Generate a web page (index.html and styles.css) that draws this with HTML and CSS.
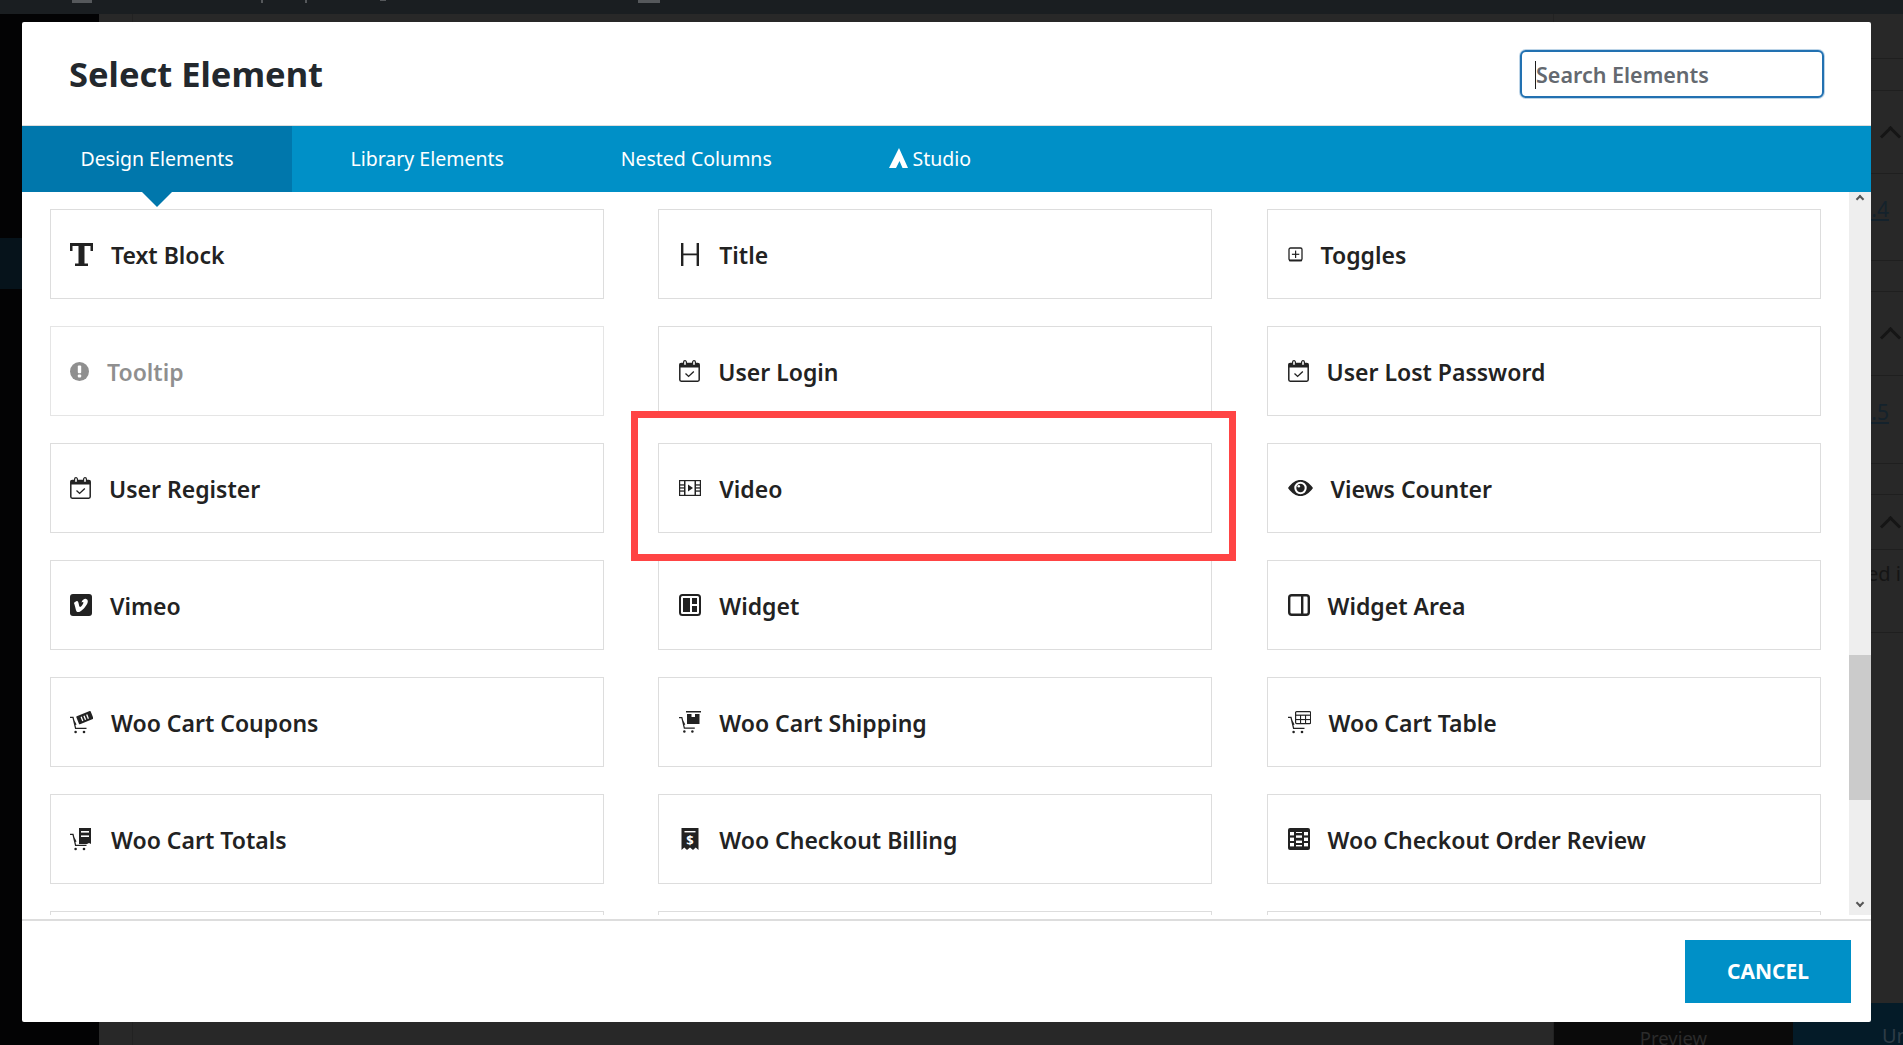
FILE: index.html
```html
<!DOCTYPE html>
<html lang="en">
<head>
<meta charset="utf-8">
<title>Select Element</title>
<link rel="stylesheet" href="styles.css">
</head>
<body>
<div class="backdrop">
  <div class="topbar"><i class="tick t1"></i><i class="tick t2"></i><i class="tick t3"></i><i class="tick t4"></i><i class="tick t5"></i></div>
  <aside class="sidebar"><div class="side-active"></div></aside>
  <main class="main">
    <div class="main-column"></div>
    <section class="panel">
      <div class="panel-rows">
        <div class="prow h45"></div>
        <div class="prow h32"></div>
        <div class="prow h83"><span class="chev"></span></div>
        <div class="prow h87"><a class="plink">Version 1.4</a></div>
        <div class="prow h31"></div>
        <div class="prow h84"><span class="chev"></span></div>
        <div class="prow h88"><a class="plink">Version 1.5</a></div>
        <div class="prow h31"></div>
        <div class="prow h55"><span class="chev"></span></div>
        <div class="prow h83 top"><span class="ptext">Required i</span></div>
      </div>
      <div class="pfoot"><span class="preview">Preview</span><span class="update">Unpublish</span></div>
    </section>
  </main>
</div>

<div class="modal" role="dialog">
  <header class="mhead">
    <h2 class="mtitle">Select Element</h2>
    <div class="search"><input class="search-input" type="text" placeholder="Search Elements"><i class="caret"></i></div>
  </header>
  <nav class="tabs">
    <a class="tab active">Design Elements</a>
    <a class="tab">Library Elements</a>
    <a class="tab">Nested Columns</a>
    <a class="tab studio"><svg class="studio-ico" viewBox="0 0 19 20"><path d="M10 0 L19 20 L13.5 20 L10.5 13 L7 20 L0 20 Z" fill="#fff"/></svg>Studio</a>
  </nav>
  <div class="mbody">
    <div class="grid">
      <div class="card"><svg class="ico w23" viewBox="0 0 23 23"><rect x="0" y="0" width="23" height="3"/><rect x="0" y="0" width="2.5" height="8"/><rect x="20.5" y="0" width="2.5" height="8"/><rect x="8.5" y="0" width="6" height="23"/><rect x="5" y="20.5" width="13" height="2.5"/></svg><span>Text Block</span></div>
      <div class="card"><svg class="ico w22t" viewBox="0 0 22 23"><rect x="2" y="0" width="2.4" height="23"/><rect x="17.6" y="0" width="2.4" height="23"/><rect x="2" y="10.5" width="18" height="1.8"/></svg><span>Title</span></div>
      <div class="card"><svg class="ico w15" viewBox="0 0 15 15"><rect x="1" y="1" width="13" height="12.5" rx="1.5" fill="none" stroke="currentColor" stroke-width="1.3"/><rect x="1" y="12.6" width="13" height="1.7"/><rect x="7" y="3.6" width="1.2" height="7.4"/><rect x="3.9" y="6.7" width="7.4" height="1.2"/></svg><span>Toggles</span></div>

      <div class="card off"><svg class="ico w19" viewBox="0 0 19 19"><circle cx="9.5" cy="9.5" r="9.5"/><rect x="7.8" y="3.6" width="3.4" height="7.6" rx="1" fill="#fff"/><rect x="7.8" y="12.4" width="3.4" height="3.2" rx="1" fill="#fff"/></svg><span>Tooltip</span></div>
      <div class="card"><svg class="ico w21" viewBox="0 0 21 22"><use href="#cal"/></svg><span>User Login</span></div>
      <div class="card"><svg class="ico w21" viewBox="0 0 21 22"><use href="#cal"/></svg><span>User Lost Password</span></div>

      <div class="card"><svg class="ico w21" viewBox="0 0 21 22"><use href="#cal"/></svg><span>User Register</span></div>
      <div class="card"><svg class="ico w22 h16" viewBox="0 0 22 16"><rect x=".6" y=".6" width="20.8" height="14.8" fill="none" stroke="currentColor" stroke-width="1.2"/><rect x="5" y="0" width="1.5" height="16"/><rect x="15.5" y="0" width="1.5" height="16"/><rect x="0" y="4.3" width="6" height="1.3"/><rect x="0" y="7.3" width="6" height="1.3"/><rect x="0" y="10.4" width="6" height="1.3"/><rect x="16" y="4.3" width="6" height="1.3"/><rect x="16" y="7.3" width="6" height="1.3"/><rect x="16" y="10.4" width="6" height="1.3"/><path d="M9 4.5 L14 8 L9 11.5 Z"/></svg><span>Video</span></div>
      <div class="card"><svg class="ico w25 h16" viewBox="0 0 25 16"><path fill-rule="evenodd" d="M0 8 C4 2.5 8 0 12.5 0 C17 0 21 2.5 25 8 C21 13.5 17 16 12.5 16 C8 16 4 13.5 0 8 Z M12.5 1.8 A6.2 6.2 0 1 0 12.5 14.2 A6.2 6.2 0 1 0 12.5 1.8 Z"/><circle cx="12.5" cy="8" r="4.2"/><circle cx="10.8" cy="6.2" r="1.3" fill="#fff"/></svg><span>Views Counter</span></div>

      <div class="card"><svg class="ico w22" viewBox="0 0 22 22"><rect width="22" height="22" rx="3"/><path d="M6.4 17.2 C4.8 12 4.6 10 3.9 9 C5 8 6.1 6.9 7 7 C9.2 7.3 8.6 12.5 10 13 C11.4 13.2 14.5 8.3 13 8.1 C12.5 8 12 8.3 11.5 8.6 C12.3 5.6 14.4 4.6 16 4.9 C18 5.3 18.3 7.4 17.3 9.6 C15.8 12.8 11.8 17.3 9.2 18 C8 18.3 7 18 6.4 17.2 Z" fill="#fff"/></svg><span>Vimeo</span></div>
      <div class="card"><svg class="ico w22" viewBox="0 0 22 22"><rect x="1" y="1" width="20" height="20" rx="2.5" fill="none" stroke="currentColor" stroke-width="2"/><rect x="4" y="4" width="7" height="14"/><rect x="13" y="4" width="5" height="6"/><rect x="13" y="12" width="5" height="6"/></svg><span>Widget</span></div>
      <div class="card"><svg class="ico w22" viewBox="0 0 22 22"><rect x="1.2" y="1.2" width="19.6" height="19.6" rx="2.5" fill="none" stroke="currentColor" stroke-width="2.4"/><rect x="13" y="1" width="2.4" height="20"/></svg><span>Widget Area</span></div>

      <div class="card"><svg class="ico w23" viewBox="0 0 23 23"><use href="#cart"/><g transform="rotate(-22 14.5 6.5)"><rect x="7" y="2.5" width="15.5" height="8.5" rx=".8"/><rect x="11" y="4.6" width="1.3" height="4.4" fill="#fff"/><rect x="14" y="4.6" width="1.3" height="4.4" fill="#fff"/><rect x="17" y="4.6" width="1.3" height="4.4" fill="#fff"/></g></svg><span>Woo Cart Coupons</span></div>
      <div class="card"><svg class="ico w22t" viewBox="0 0 22 23"><use href="#cart"/><rect x="7" y="0" width="15" height="1.5"/><path d="M8 3 H12.5 V6 H16 V3 H20.5 V13 H8 Z"/></svg><span>Woo Cart Shipping</span></div>
      <div class="card"><svg class="ico w23" viewBox="0 0 23 23"><use href="#cart"/><rect x="7.6" y=".6" width="15" height="12" rx="1" fill="none" stroke="currentColor" stroke-width="1.2"/><rect x="7.6" y="3.6" width="15" height="1.2"/><rect x="12" y="4" width="1.1" height="8.5"/><rect x="17" y="4" width="1.1" height="8.5"/><rect x="7.6" y="8" width="15" height="1.1"/></svg><span>Woo Cart Table</span></div>

      <div class="card"><svg class="ico w23 i1" viewBox="0 0 23 23"><use href="#cart"/><path d="M9 0 H21 V16 L19 15 L17 16 H9 Z"/><rect x="11" y="3" width="8" height="1.6" fill="#fff"/><rect x="11" y="7.4" width="8" height="1.6" fill="#fff"/></svg><span>Woo Cart Totals</span></div>
      <div class="card"><svg class="ico w22" viewBox="0 0 22 22"><path d="M2.5 0 H19.5 V22 L16.7 19.5 L14 22 L11 19.5 L8 22 L5.3 19.5 L2.5 22 Z"/><rect x="5.5" y="3" width="11" height="1.4" fill="#fff"/><text class="dollar" x="11" y="17" text-anchor="middle">$</text></svg><span>Woo Checkout Billing</span></div>
      <div class="card"><svg class="ico w22" viewBox="0 0 22 22"><rect width="22" height="22" rx="2"/><g fill="#fff"><rect x="2" y="4" width="4" height="3.4"/><rect x="8" y="4" width="6" height="1"/><rect x="16" y="4" width="4" height="3.4"/><rect x="2" y="9.6" width="4" height="3.4"/><rect x="8" y="7.4" width="6" height="2.4"/><rect x="16" y="9.6" width="4" height="3.4"/><rect x="2" y="15" width="4" height="3.4"/><rect x="8" y="12.6" width="6" height="2.4"/><rect x="8" y="17" width="6" height="1.4"/><rect x="16" y="15" width="4" height="3.4"/></g></svg><span>Woo Checkout Order Review</span></div>

      <div class="card"></div>
      <div class="card"></div>
      <div class="card"></div>
    </div>
    <div class="sbar">
      <span class="sb-up"></span>
      <span class="sb-thumb"></span>
      <span class="sb-down"></span>
    </div>
  </div>
  <footer class="mfoot"><button class="cancel" type="button">CANCEL</button></footer>
</div>

<div class="callout"></div>

<svg class="defs" width="0" height="0" aria-hidden="true">
  <symbol id="cal" viewBox="0 0 21 22">
    <rect x=".8" y="3.4" width="19.4" height="17.8" rx="1.4" fill="none" stroke="currentColor" stroke-width="1.5"/>
    <rect x=".8" y="3.4" width="19.4" height="4.1" fill="currentColor"/>
    <rect x="4.6" y=".7" width="2.8" height="5" rx="1.4" fill="#fff" stroke="currentColor" stroke-width="1.2"/>
    <rect x="13.6" y=".7" width="2.8" height="5" rx="1.4" fill="#fff" stroke="currentColor" stroke-width="1.2"/>
    <path d="M6.5 13.6 L9.6 16.4 L14.8 11.6" fill="none" stroke="currentColor" stroke-width="1.4"/>
  </symbol>
  <symbol id="cart" viewBox="0 0 23 23">
    <path d="M0 6.4 H3 L5.6 17.4 H16.5 M4 10 L6 13.8" fill="none" stroke="currentColor" stroke-width="1.3"/>
    <circle cx="5.6" cy="21" r="1.3" fill="currentColor"/>
    <circle cx="14" cy="21" r="1.3" fill="currentColor"/>
  </symbol>
</svg>
</body>
</html>
```

FILE: styles.css
```css
* { box-sizing: border-box; }
html, body { margin: 0; height: 100%; overflow: hidden; background: #282828; }
body { font-family: "Noto Sans", sans-serif; color: #222; }

/* dimmed page behind the dialog */
.backdrop { display: grid; grid-template-columns: 99px 1fr; grid-template-rows: 14px 1fr; height: 1045px; }
.topbar { grid-column: 1 / 3; background: #1a1e21; display: flex; align-items: flex-start; }
.tick { display: block; background: #55585b; height: 3px; }
.t1 { width: 20px; margin-left: 72px; }
.t2 { width: 2px; margin-left: 169px; }
.t3 { width: 2px; margin-left: 42px; }
.t4 { width: 6px; margin-left: 73px; height: 1px; }
.t5 { width: 22px; margin-left: 252px; }
.sidebar { background: #030304; padding-top: 224px; }
.side-active { height: 51px; background: #06131b; }
.main { display: flex; justify-content: space-between; min-width: 0; }
.main-column { width: 34px; border-right: 1px solid #222; }
.panel { width: 350px; display: flex; flex-direction: column; border-left: 1px solid #222; overflow: hidden; }
.panel-rows { flex: 1; }
.prow { display: flex; align-items: center; justify-content: flex-end; border-bottom: 1px solid #1f1f1f; padding-right: 5px; white-space: nowrap; }
.h45 { height: 45px; } .h32 { height: 32px; } .h83 { height: 83px; } .h87 { height: 87px; }
.h31 { height: 31px; } .h84 { height: 84px; } .h88 { height: 88px; } .h55 { height: 55px; }
.prow.top { align-items: flex-start; padding-top: 10px; padding-right: 0; }
.chev { width: 15px; height: 15px; border-left: 3px solid #151515; border-top: 3px solid #151515; transform: rotate(45deg); margin-top: 8px; }
.plink { color: #14222c; font-size: 21px; text-decoration: underline; margin: 0 9px 16px 0; }
.ptext { color: #151515; font-size: 20px; margin-right: 2px; }
.pfoot { height: 42px; display: flex; font-size: 18.5px; overflow: hidden; }
.preview { width: 240px; background: #0a0a0a; color: #2b2b2b; text-align: center; padding-top: 22px; }
.update { width: 110px; background: #041b28; color: #2d3c46; padding: 19px 0 0 89px; font-size: 20px; white-space: nowrap; }

/* dialog */
.modal { position: absolute; left: 22px; top: 22px; width: 1849px; height: 1000px; background: #fff; border-radius: 2px; display: flex; flex-direction: column; overflow: hidden; }
.mhead { height: 104px; flex: none; border-bottom: 1px solid #ddd; display: flex; align-items: center; justify-content: space-between; padding: 0 47px; }
.mtitle { margin: 2px 0 0; font-size: 34.5px; font-weight: 700; color: #23282d; line-height: 1; }
.search { position: relative; width: 304px; height: 48px; }
.search-input { width: 100%; height: 100%; border: 2px solid #2271b1; border-radius: 6px; padding: 2px 14px 0; font: 600 21.5px "Noto Sans", sans-serif; outline: none; background: #fff; box-shadow: 0 0 0 1px rgba(34, 113, 177, .3); }
.search-input::placeholder { color: #646970; opacity: 1; }
.caret { position: absolute; left: 15px; top: 11px; width: 1px; height: 28px; background: #1e1e1e; }
.tabs { height: 66px; flex: none; background: #0090c7; display: flex; }
.tab { padding: 0 58.4px 2px; color: #fff; font-size: 19.5px; display: flex; align-items: center; position: relative; white-space: nowrap; }
.tab.active { background: #0077ac; }
.tab.active::after { content: ""; position: absolute; left: 120px; bottom: -15px; border-left: 15px solid transparent; border-right: 15px solid transparent; border-top: 15px solid #0077ac; }
.studio-ico { width: 19px; height: 20px; margin-right: 5px; }

.mbody { height: 723px; flex: none; display: flex; }
.grid { flex: 1; min-width: 0; display: grid; grid-template-columns: 553.5px 554px 554px; grid-auto-rows: 90px; column-gap: 54.75px; row-gap: 27px; padding: 17px 28px 0; overflow: hidden; }
.card { border: 1px solid #ddd; background: #fff; display: flex; align-items: center; gap: 18px; padding-left: 20px; font-size: 23px; font-weight: 600; color: #222; white-space: nowrap; }
.card span { padding-top: 1px; }
.card:nth-child(3n+1) { padding-left: 19px; }
.card:nth-child(3n) { gap: 17.5px; }
.card.off { opacity: .5; border-color: #ccc; }
.ico { flex: none; height: 23px; fill: currentColor; }
.w15 { width: 15px; height: 15px; }
.w19 { width: 19px; height: 19px; }
.w21 { width: 21px; height: 22px; }
.w22 { width: 22px; height: 22px; }
.w22t { width: 22px; }
.w23 { width: 23px; }
.w25 { width: 25px; }
.ico.h16 { height: 16px; }
.dollar { font: 700 13px "Noto Sans", sans-serif; fill: #fff; }

.sbar { width: 22px; flex: none; background: #eee; display: flex; flex-direction: column; align-items: center; }
.sb-thumb { width: 22px; height: 145px; background: #cbcbcb; margin-top: 453px; }
.sb-up, .sb-down { width: 6px; height: 6px; border-left: 2px solid #555; border-top: 2px solid #555; transform: rotate(45deg); }
.sb-up { margin-top: 4px; }
.sb-down { transform: rotate(225deg); margin-top: auto; margin-bottom: 9px; }

.mfoot { flex: 1; margin-top: 4px; border-top: 2px solid #ddd; display: flex; justify-content: flex-end; padding: 19px 20px 0 0; }
.cancel { width: 166px; height: 63px; border: 0; padding: 0 0 2px; background: #0090c7; color: #fff; font: 700 21px "Noto Sans", sans-serif; }

/* annotation */
.callout { position: absolute; left: 631px; top: 411px; width: 605px; height: 150px; border: 7px solid #f44; }
.defs { position: absolute; }
```
